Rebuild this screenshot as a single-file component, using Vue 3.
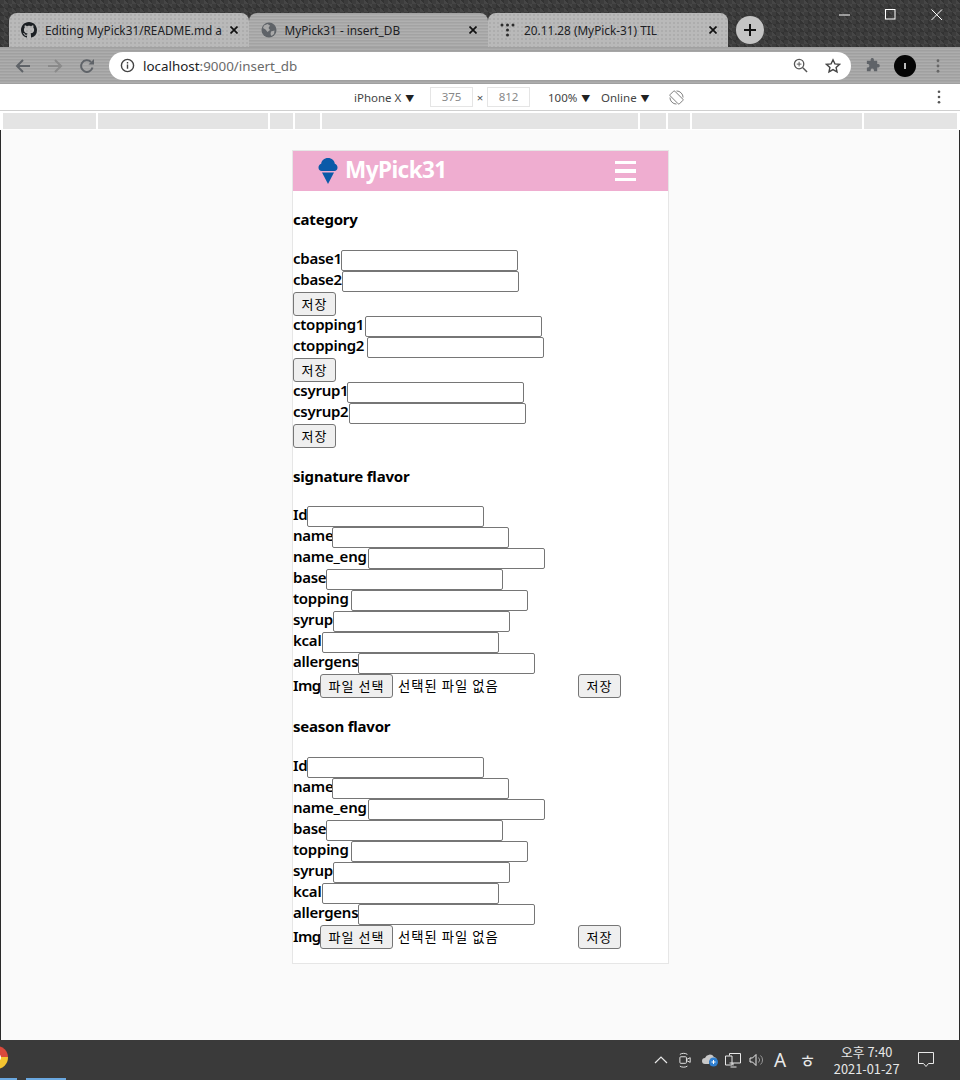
<script setup>
const mediaSegs = [93, 170, 23, 25, 316, 26, 22, 170, 93]
const category = [
  { rows: [{ l: 'cbase1', w: 48 }, { l: 'cbase2', w: 49 }] },
  { rows: [{ l: 'ctopping1', w: 72 }, { l: 'ctopping2', w: 74 }] },
  { rows: [{ l: 'csyrup1', w: 54 }, { l: 'csyrup2', w: 56 }] }
]
const flavor = [
  { l: 'Id', w: 14 },
  { l: 'name', w: 39 },
  { l: 'name_eng', w: 75 },
  { l: 'base', w: 33 },
  { l: 'topping', w: 58 },
  { l: 'syrup', w: 40 },
  { l: 'kcal', w: 29 },
  { l: 'allergens', w: 65 }
]
const flavorSections = ['signature flavor', 'season flavor']
const px = (n) => ({ width: n + 'px' })
</script>

<template>
  <div class="win">
    <div class="tabstrip">
      <div class="tab light">
        <svg class="fav" viewBox="0 0 16 16" width="16" height="16"><path fill="#1b1f23" d="M8 0C3.58 0 0 3.58 0 8c0 3.54 2.29 6.53 5.47 7.59.4.07.55-.17.55-.38 0-.19-.01-.82-.01-1.49-2.01.37-2.53-.49-2.69-.94-.09-.23-.48-.94-.82-1.13-.28-.15-.68-.52-.01-.53.63-.01 1.08.58 1.23.82.72 1.21 1.87.87 2.33.66.07-.52.28-.87.51-1.07-1.78-.2-3.64-.89-3.64-3.95 0-.87.31-1.59.82-2.15-.08-.2-.36-1.02.08-2.12 0 0 .67-.21 2.2.82.64-.18 1.32-.27 2-.27s1.36.09 2 .27c1.53-1.04 2.2-.82 2.2-.82.44 1.1.16 1.92.08 2.12.51.56.82 1.27.82 2.15 0 3.07-1.87 3.75-3.65 3.95.29.25.54.73.54 1.48 0 1.07-.01 1.93-.01 2.2 0 .21.15.46.55.38A8.01 8.01 0 0 0 16 8c0-4.42-3.58-8-8-8z"/></svg>
        <span class="tabtitle">Editing MyPick31/README.md a</span>
        <svg class="x" viewBox="0 0 8 8" width="8" height="8"><path d="M.5.5l7 7M7.500.5l-7 7" stroke="#111" stroke-width="1.700"/></svg>
      </div>
      <div class="tab">
        <svg class="fav" viewBox="0 0 16 16" width="16" height="16"><circle cx="8" cy="8" r="7.500" fill="#5f6368"/><path fill="#a9a9a9" d="M3 3.500 6.500 2 9 3.500 7.500 6 9 8 6.500 10 4.500 7.500 2 6zM10 9.500l3.500-1-.5 3.500-2.500 2-1-2z"/></svg>
        <span class="tabtitle">MyPick31 - insert_DB</span>
        <svg class="x" viewBox="0 0 8 8" width="8" height="8"><path d="M.5.5l7 7M7.500.5l-7 7" stroke="#111" stroke-width="1.700"/></svg>
      </div>
      <div class="tab light third">
        <svg class="fav" viewBox="0 0 16 16" width="16" height="16"><g fill="#2b2b2b"><circle cx="2" cy="3" r="1.500"/><circle cx="7.500" cy="3" r="1.500"/><circle cx="13" cy="3" r="1.500"/><circle cx="7.500" cy="8" r="1.500"/><circle cx="7.500" cy="13" r="1.500"/></g></svg>
        <span class="tabtitle">20.11.28 (MyPick-31) TIL</span>
        <svg class="x" viewBox="0 0 8 8" width="8" height="8"><path d="M.5.5l7 7M7.500.5l-7 7" stroke="#111" stroke-width="1.700"/></svg>
      </div>
      <div class="newtab">
        <svg viewBox="0 0 14 14" width="14" height="14"><path d="M7 1v12M1 7h12" stroke="#111" stroke-width="2"/></svg>
      </div>
      <div class="winbtns">
        <svg viewBox="0 0 12 12" width="12" height="12"><path d="M0 6h11" stroke="#fff" stroke-width="1"/></svg>
        <svg viewBox="0 0 12 12" width="12" height="12"><rect x=".5" y=".5" width="9.500" height="9.500" fill="none" stroke="#fff"/></svg>
        <svg viewBox="0 0 12 12" width="12" height="12"><path d="M.5.5l10.500 10.500M11 .5.500 11" stroke="#fff"/></svg>
      </div>
    </div>

    <div class="toolbar">
      <svg class="tb back" viewBox="0 0 16 16" width="16" height="16"><path d="M15 8H2M8 2 2 8l6 6" fill="none" stroke="#5f6368" stroke-width="2"/></svg>
      <svg class="tb fwd" viewBox="0 0 16 16" width="16" height="16"><path d="M1 8h13M8 2l6 6-6 6" fill="none" stroke="#8a8a8a" stroke-width="2"/></svg>
      <svg class="tb rel" viewBox="0 0 16 16" width="16" height="16"><path d="M13.500 9.500A5.800 5.800 0 1 1 12 4" fill="none" stroke="#5f6368" stroke-width="2"/><path d="M9.500 6.500H15V1z" fill="#5f6368"/></svg>
      <div class="omni">
        <svg viewBox="0 0 16 16" width="15" height="15"><circle cx="8" cy="8" r="6.500" fill="none" stroke="#444" stroke-width="1.500"/><path d="M8 7v4.500M8 4.300v1.500" stroke="#444" stroke-width="1.500"/></svg>
        <span class="url">localhost<span class="dim">:9000/insert_db</span></span>
        <svg class="zoomic" viewBox="0 0 16 16" width="15" height="15"><circle cx="6.500" cy="6.500" r="5" fill="none" stroke="#555" stroke-width="1.400"/><path d="M10.500 10.500 15 15" stroke="#555" stroke-width="1.600"/><path d="M6.500 4v5M4 6.500h5" stroke="#555"/></svg>
        <svg class="star" viewBox="0 0 16 16" width="16" height="16"><path d="M8 1.800l1.900 4.100 4.500.5-3.300 3 .9 4.500L8 11.600l-4 2.300.9-4.500-3.300-3 4.500-.5z" fill="none" stroke="#444" stroke-width="1.400"/></svg>
      </div>
      <svg class="ext" viewBox="0 0 16 16" width="15" height="15"><path fill="#5f6368" d="M6 1.500a1.800 1.800 0 0 1 3.500 0V3H13v3.500h1.300a1.900 1.900 0 0 1 0 3.700H13V14H9.500v-1.300a1.800 1.800 0 0 0-3.500 0V14H2v-3.800h1.200a1.900 1.900 0 0 0 0-3.700H2V3h4z"/></svg>
      <div class="avatar"><i></i></div>
      <svg class="menu" viewBox="0 0 4 16" width="4" height="14"><g fill="#666"><circle cx="2" cy="2" r="1.600"/><circle cx="2" cy="8" r="1.600"/><circle cx="2" cy="14" r="1.600"/></g></svg>
    </div>

    <div class="devbar">
      <span class="dev d1">iPhone X <b>▼</b></span>
      <span class="dim-input first">375</span>
      <span class="times">×</span>
      <span class="dim-input">812</span>
      <span class="dev d2">100% <b>▼</b></span>
      <span class="dev d3">Online <b>▼</b></span>
      <svg class="rot" viewBox="0 0 16 16" width="15" height="15" fill="none" stroke="#7a7a7a">
        <rect x="4.500" y="1" width="7" height="14" rx="1" transform="rotate(-45 8 8)"/>
        <path d="M1 8A7 7 0 0 0 8 15M15 8A7 7 0 0 0 8 1"/>
      </svg>
      <svg class="devmenu" viewBox="0 0 4 16" width="4" height="14"><g fill="#555"><circle cx="2" cy="2" r="1.500"/><circle cx="2" cy="8" r="1.500"/><circle cx="2" cy="14" r="1.500"/></g></svg>
    </div>

    <div class="mediabar">
      <i v-for="(w, i) in mediaSegs" :key="i" :style="px(w)"></i>
    </div>

    <div class="viewport">
      <div class="phone">
        <header class="apphead">
          <svg class="logo" viewBox="0 0 20 26" width="20" height="26">
            <path fill="#0a5aa8" d="M10 0c3.800 0 6.500 2.500 6.800 5.800 1.700.5 2.700 2 2.700 3.700 0 2-1.300 3.500-3.200 3.500H3.700C1.800 13 .5 11.500.5 9.500c0-1.700 1-3.200 2.700-3.700C3.500 2.500 6.200 0 10 0z"/>
            <path fill="#0a5aa8" d="M4 14.500h12L10 26z"/>
          </svg>
          <span class="brand">MyPick31</span>
          <div class="burger"><i></i><i></i><i></i></div>
        </header>

        <h4 class="sect">category</h4>
        <template v-for="(g, gi) in category" :key="gi">
          <div v-for="r in g.rows" :key="r.l" class="row">
            <label class="lbl" :style="px(r.w)">{{ r.l }}</label><input class="inp" type="text" />
          </div>
          <div class="btnrow"><button class="btn">저장</button></div>
        </template>

        <template v-for="(s, si) in flavorSections" :key="s">
          <h4 class="sect" :class="{ tight: si === 0 }">{{ s }}</h4>
          <div v-for="r in flavor" :key="r.l" class="row">
            <label class="lbl" :style="px(r.w)">{{ r.l }}</label><input class="inp" type="text" />
          </div>
          <div class="btnrow">
            <label class="lbl imglbl">Img</label>
            <button class="btn filebtn">파일 선택</button>
            <span class="nofile">선택된 파일 없음</span>
            <button class="btn">저장</button>
          </div>
        </template>
        <div class="phoneend"></div>
      </div>
    </div>

    <footer class="taskbar">
      <div class="chromeic"></div>
      <i class="run r1"></i>
      <i class="run r2"></i>
      <svg class="tray" viewBox="0 0 14 8" width="14" height="8"><path d="M1 7l6-6 6 6" fill="none" stroke="#e8e8e8" stroke-width="1.200"/></svg>
      <svg class="tray t2" viewBox="0 0 16 18" width="15" height="17"><rect x="2" y="5" width="7" height="7" rx="1" fill="none" stroke="#e8e8e8"/><path d="M9 8l4-2v5l-4-2M2 2.500c2-1.500 6-1.500 8 0M2 15c2 1.500 6 1.500 8 0" fill="none" stroke="#e8e8e8"/></svg>
      <svg class="tray t3" viewBox="0 0 18 14" width="18" height="14"><path d="M4 11a3 3 0 0 1 0-6 5 5 0 0 1 9-1 4 4 0 0 1 3 4H8v3z" fill="#c8c8c8"/><circle cx="12.500" cy="9" r="4.500" fill="#2f7fd0"/><path d="M10.500 9h4M12.500 7v4" stroke="#fff"/></svg>
      <svg class="tray t4" viewBox="0 0 16 15" width="16" height="15"><path d="M4.500 2.500V.5H15.500v9.500H4.500M.5 3h6.500v9H.5zM8 10v2.500M5.500 14h6" fill="none" stroke="#e8e8e8"/></svg>
      <svg class="tray t5" viewBox="0 0 16 14" width="16" height="14"><path d="M1 5h2.500L7 1.500v11L3.500 9H1z" fill="none" stroke="#e8e8e8"/><path d="M9.500 4.500a3.500 3.500 0 0 1 0 5M11.500 2.500a6 6 0 0 1 0 9" fill="none" stroke="#999"/></svg>
      <span class="ime">A</span>
      <span class="ime2">ㅎ</span>
      <div class="clock"><span>오후 7:40</span><span>2021-01-27</span></div>
      <svg class="notif" viewBox="0 0 16 16" width="16" height="16"><path d="M.5.500h15v11H10.500L8 14.500 5.500 11.500H.5z" fill="none" stroke="#e8e8e8"/></svg>
    </footer>
  </div>
</template>

<style>
html, body { margin: 0; background: #2d2d2d; }
</style>

<style scoped>
.win {
  width: 960px;
  height: 1080px;
  overflow: hidden;
  display: flex;
  flex-direction: column;
  font-family: "Noto Sans", "Noto Sans CJK KR", sans-serif;
  position: relative;
  background: #2a2a2a;
}

/* Tab strip */
.tabstrip {
  height: 47px;
  box-sizing: border-box;
  padding: 13px 0 0 9px;
  display: flex;
  background-color: #3c3c3c;
  background-image:
    linear-gradient(45deg, #333 25%, transparent 25%, transparent 75%, #333 75%),
    linear-gradient(45deg, #464646 25%, transparent 25%, transparent 75%, #464646 75%);
  background-size: 8px 8px;
  background-position: 0 0, 4px 4px;
}
.tab {
  width: 239.500px;
  height: 34px;
  box-sizing: border-box;
  display: flex;
  align-items: center;
  padding: 0 11px 0 12px;
  border-radius: 8px 8px 0 0;
  background: repeating-linear-gradient(0deg, #a3a3a3 0 1px, #b0b0b0 1px 2px, #a9a9a9 2px 3px);
  color: #202124;
  font-size: 11.800px;
}
.tab.light {
  background: radial-gradient(#adadad 1px, #b9b9b9 1.500px) 0 0 / 4px 4px;
}
.fav { flex: none; margin-right: 8px; }
.tabtitle { flex: 1; white-space: nowrap; overflow: hidden; }
.x { flex: none; }
.newtab {
  width: 28px;
  height: 28px;
  border-radius: 50%;
  background: #c4c4c4;
  margin: 3px 0 0 8px;
  display: flex;
  align-items: center;
  justify-content: center;
}
.winbtns {
  margin: -4px 0 0 auto;
  display: flex;
  gap: 34px;
  padding-right: 17px;
  height: 12px;
}

/* Toolbar */
.toolbar {
  height: 37px;
  box-sizing: border-box;
  display: flex;
  align-items: center;
  background: repeating-linear-gradient(0deg, #a0a0a0 0 1px, #adadad 1px 2px, #a6a6a6 2px 3px);
  padding-left: 15px;
}
.tb { flex: none; }
.fwd { margin-left: 16px; }
.rel { margin-left: 16px; }
.omni {
  width: 742px;
  height: 28px;
  margin-left: 14px;
  background: #fff;
  border-radius: 14px;
  display: flex;
  align-items: center;
  padding-left: 11px;
  box-sizing: border-box;
}
.url { margin-left: 8px; font-size: 13.400px; color: #202124; }
.dim { color: #6a6a6a; }
.zoomic { margin-left: auto; }
.star { margin: 0 10px 0 17px; }
.ext { margin-left: 14px; }
.avatar {
  width: 22px;
  height: 22px;
  border-radius: 50%;
  background: #050505;
  margin-left: 14px;
  display: flex;
  align-items: center;
  justify-content: center;
}
.avatar i { width: 2px; height: 6px; background: #bbb; }
.menu { margin-left: 20px; }

/* Devtools bar */
.devbar {
  height: 27px;
  box-sizing: border-box;
  background: #fff;
  border-bottom: 1px solid #cfcfcf;
  display: flex;
  align-items: center;
  font-size: 11.500px;
  color: #444;
  padding-left: 354px;
}
.dev { white-space: nowrap; }
.dev b { font-size: 9px; font-weight: 400; color: #222; margin-left: 1px; }
.d1 { width: 60px; }
.dim-input {
  width: 43px;
  height: 20px;
  box-sizing: border-box;
  border: 1px solid #e5e5e5;
  color: #888;
  text-align: center;
  line-height: 18px;
}
.dim-input.first { margin-left: 16px; }
.times { width: 14px; text-align: center; color: #555; }
.d2 { margin-left: 18px; width: 42px; }
.d3 { margin-left: 11px; width: 46px; }
.rot { margin-left: 22px; flex: none; }
.devmenu { margin-left: 253px; flex: none; }

/* Media bar */
.mediabar {
  height: 19px;
  background: #fff;
  padding: 2px 3px 0;
  box-sizing: border-box;
  display: flex;
  gap: 2px;
  flex: none;
}
.mediabar i { display: block; height: 16px; background: #e4e4e4; }

/* Page */
.viewport {
  flex: 1;
  background: #fafafa;
  margin: 0 1px;
  padding: 21px 0 0 292px;
}
.phone {
  width: 375px;
  background: #fff;
  box-shadow: 0 0 0 1px #e6e6e6;
  color: #000;
  font-size: 15px;
}
.apphead {
  height: 40px;
  background: #efadd0;
  display: flex;
  align-items: center;
  padding: 0 32px 0 25px;
}
.logo { flex: none; }
.brand {
  margin-left: 7px;
  color: #fff;
  font-weight: 700;
  font-size: 22.500px;
  letter-spacing: -0.550px;
  line-height: 38px;
  margin-bottom: 2px;
}
.burger { margin-left: auto; display: flex; flex-direction: column; gap: 5px; }
.burger i { display: block; width: 21px; height: 3.500px; background: #fff; }

.sect {
  margin: 0;
  height: 59px;
  box-sizing: border-box;
  padding-top: 18px;
  font-size: 15px;
  font-weight: 700;
  line-height: 21px;
  letter-spacing: -0.200px;
}
.sect.tight { height: 58px; }
.row { display: flex; height: 21px; }
.lbl {
  flex: none;
  font-weight: 600;
  font-size: 15px;
  white-space: nowrap;
  line-height: 17px;
  letter-spacing: -0.250px;
}
.inp {
  width: 177px;
  height: 21px;
  box-sizing: border-box;
  margin: 0;
  padding: 1px 2px;
  background: #fff;
  border: 1px solid #767676;
  border-radius: 2px;
}
.btnrow { height: 24px; display: flex; }
.btn {
  height: 24px;
  width: 43px;
  box-sizing: border-box;
  margin: 0;
  padding: 0;
  background: #efefef;
  border: 1px solid #767676;
  border-radius: 3px;
  color: #000;
  font-family: "Noto Sans CJK KR", sans-serif;
  font-size: 13px;
  letter-spacing: 1px;
  line-height: 20px;
}
.imglbl { width: 27px; line-height: 22px; letter-spacing: -0.600px; }
.filebtn { width: 73px; }
.nofile {
  font-family: "Noto Sans CJK KR", sans-serif;
  font-size: 13.330px;
  letter-spacing: 1px;
  line-height: 24px;
  margin-left: 5px;
  width: 180px;
}
.phoneend { height: 14px; }

/* Taskbar */
.taskbar {
  height: 40px;
  flex: none;
  background: #3a3a3a;
  position: relative;
  display: flex;
  align-items: center;
  color: #e8e8e8;
  padding-left: 654px;
}
.chromeic {
  position: absolute;
  left: -15px;
  top: 6px;
  width: 23px;
  height: 23px;
  border-radius: 50%;
  background: conic-gradient(#d9493c 0 25%, #f4c430 25% 75%, #d9493c 75%);
}
.chromeic::after {
  content: "";
  position: absolute;
  left: 7px;
  top: 7px;
  width: 9px;
  height: 9px;
  border-radius: 50%;
  background: #5a95e8;
  border: 2px solid #fff;
  box-sizing: border-box;
}
.run { position: absolute; bottom: 0; height: 2px; background: #6aa8e0; }
.r1 { left: 0; width: 17px; }
.r2 { left: 26px; width: 40px; }
.tray { flex: none; }
.t2 { margin-left: 10px; }
.t3 { margin-left: 8px; }
.t4 { margin-left: 6px; }
.t5 { margin-left: 8px; }
.ime { margin-left: 9px; font-size: 19px; font-family: "Noto Sans", sans-serif; }
.ime2 { margin-left: 13px; font-size: 18px; font-family: "Noto Sans CJK KR", sans-serif; }
.clock {
  margin-left: 13px;
  width: 76px;
  display: flex;
  flex-direction: column;
  align-items: center;
  font-size: 12.800px;
  line-height: 17px;
  font-family: "Noto Sans CJK KR", sans-serif;
}
.notif { margin-left: 13px; }
</style>
